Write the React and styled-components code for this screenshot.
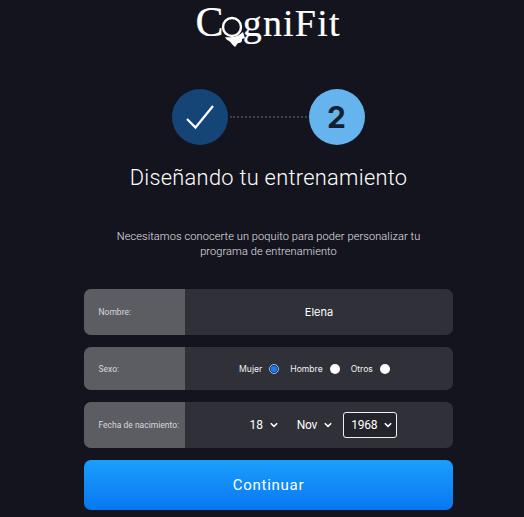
import React from "react";
import styled, { createGlobalStyle } from "styled-components";

const Global = createGlobalStyle`
  html, body { margin: 0; padding: 0; background: #14141e; }
  body { font-family: Inter, "Liberation Sans", sans-serif; }
`;

const Page = styled.div`
  width: 524px;
  height: 517px;
  overflow: hidden;
  box-sizing: border-box;
  padding: 0 71px 0 84px;
  background: #14141e;
  display: flex;
  flex-direction: column;
  align-items: stretch;
`;

const LogoWrap = styled.div`
  position: relative;
  align-self: center;
  height: 50px;
  width: 146px;
`;

const LogoText = styled.div`
  font-family: "Liberation Serif", serif;
  color: #fff;
  font-size: 38px;
  line-height: 44px;
  letter-spacing: 1.2px;
  white-space: nowrap;
  -webkit-text-stroke: 0.2px #fff;
  span { font-size: 42px; letter-spacing: -1px; }
`;

const LogoHead = styled.svg`
  position: absolute;
  left: 24px;
  top: 11px;
`;

const Steps = styled.div`
  display: flex;
  align-items: center;
  justify-content: center;
  margin-top: 39px;
  margin-left: -1px;
`;

const StepCircle = styled.div`
  width: 56px;
  height: 56px;
  border-radius: 50%;
  background: ${(p) => (p.$done ? "#154577" : "#66b4ee")};
  color: #14202f;
  font-size: 30px;
  font-weight: 700;
  display: flex;
  align-items: center;
  justify-content: center;
`;

const Dots = styled.div`
  width: 77px;
  margin: 0 2px;
  border-top: 2px dotted #3e3f49;
`;

const Title = styled.h1`
  margin: 19px 0 0;
  font-family: Roboto, sans-serif;
  font-weight: 300;
  font-size: 21.8px;
  line-height: 28px;
  letter-spacing: 0.3px;
  color: #fff;
  text-align: center;
`;

const Intro = styled.p`
  margin: 37px auto 0;
  width: 320px;
  font-family: Roboto, sans-serif;
  font-size: 11px;
  font-weight: 300;
  line-height: 15px;
  letter-spacing: 0.1px;
  color: #e2e2e6;
  text-align: center;
`;

const Form = styled.div`
  margin-top: 30px;
  display: flex;
  flex-direction: column;
`;

const Row = styled.div`
  display: flex;
  height: ${(p) => p.$h}px;
  margin-bottom: ${(p) => p.$mb}px;
  border-radius: 7px;
  overflow: hidden;
  background: #2f3038;
`;

const Label = styled.div`
  width: 101px;
  flex: none;
  box-sizing: border-box;
  padding-left: 14.5px;
  background: #5c5c63;
  color: #d8d8dc;
  font-family: Roboto, sans-serif;
  font-size: 8.5px;
  display: flex;
  align-items: center;
  white-space: nowrap;
`;

const Value = styled.div`
  flex: 1;
  display: flex;
  align-items: center;
  justify-content: center;
  color: #fff;
  font-size: 11px;
`;

const RadioGroup = styled.div`
  display: flex;
  align-items: center;
  gap: 11px;
  margin-right: 9px;
`;

const RadioItem = styled.label`
  display: flex;
  align-items: center;
  gap: 7px;
  font-size: 8.6px;
  color: #f2f2f4;
`;

const RadioDot = styled.span`
  box-sizing: border-box;
  width: 10px;
  height: 10px;
  border-radius: 50%;
  background: ${(p) => (p.$on ? "#1f7ae8" : "#fff")};
  border: ${(p) => (p.$on ? "1.5px solid #8cc4ff" : "0")};
  box-shadow: ${(p) => (p.$on ? "inset 0 0 0 0.7px #14141e" : "none")};
`;

const Selects = styled.div`
  display: flex;
  align-items: center;
  gap: 6px;
`;

const SelectBox = styled.div`
  height: 26px;
  box-sizing: border-box;
  padding: 0 3.5px 0 7.5px;
  display: flex;
  align-items: center;
  gap: 7px;
  font-family: Roboto, sans-serif;
  font-size: 12px;
  letter-spacing: -0.2px;
  color: #fff;
  border-radius: 3px;
  border: 1.5px solid ${(p) => (p.$focus ? "#f0f0f0" : "transparent")};
  background: ${(p) => (p.$focus ? "#23242b" : "transparent")};
`;

const Button = styled.button`
  height: 50px;
  border: 0;
  border-radius: 7px;
  background: linear-gradient(180deg, #1b9ffc 0%, #0877f2 100%);
  color: #fff;
  font-family: Roboto, sans-serif;
  font-size: 15px;
  letter-spacing: 0.75px;
  width: 100%;
`;

const Chevron = () => (
  <svg width="8" height="6" viewBox="0 0 8 6" fill="none">
    <path d="M0.8 1.2L4 4.4l3.2-3.2" stroke="#fff" strokeWidth="1.5" />
  </svg>
);

export default function App() {
  return (
    <Page>
      <Global />
      <LogoWrap>
        <LogoText><span>C</span>ogniFit</LogoText>
        <LogoHead width="28" height="38" viewBox="0 0 28 38">
          <circle cx="12" cy="16" r="9" fill="#14141e" stroke="#fff" strokeWidth="2.4" />
          <path d="M5 26c5 1 13 0 18-5l2 6-3 1 0 2c-1 2-3 2-4 2l-3 4c-3-2-4-5-6-6-2-1-3-2-4-4z" fill="#fff" />
        </LogoHead>
      </LogoWrap>
      <Steps>
        <StepCircle $done>
          <svg width="30" height="26" viewBox="0 0 30 26" fill="none">
            <path d="M2 15l8.5 8.5L28 2" stroke="#fff" strokeWidth="2.2" />
          </svg>
        </StepCircle>
        <Dots />
        <StepCircle>2</StepCircle>
      </Steps>
      <Title>Diseñando tu entrenamiento</Title>
      <Intro>Necesitamos conocerte un poquito para poder personalizar tu programa de entrenamiento</Intro>
      <Form>
        <Row $h={46} $mb={12}>
          <Label>Nombre:</Label>
          <Value>Elena</Value>
        </Row>
        <Row $h={43} $mb={12}>
          <Label>Sexo:</Label>
          <Value>
            <RadioGroup>
              <RadioItem>Mujer <RadioDot $on /></RadioItem>
              <RadioItem>Hombre <RadioDot /></RadioItem>
              <RadioItem>Otros <RadioDot /></RadioItem>
            </RadioGroup>
          </Value>
        </Row>
        <Row $h={46} $mb={12}>
          <Label>Fecha de nacimiento:</Label>
          <Value>
            <Selects>
              <SelectBox>18 <Chevron /></SelectBox>
              <SelectBox>Nov <Chevron /></SelectBox>
              <SelectBox $focus>1968 <Chevron /></SelectBox>
            </Selects>
          </Value>
        </Row>
        <Button>Continuar</Button>
      </Form>
    </Page>
  );
}
